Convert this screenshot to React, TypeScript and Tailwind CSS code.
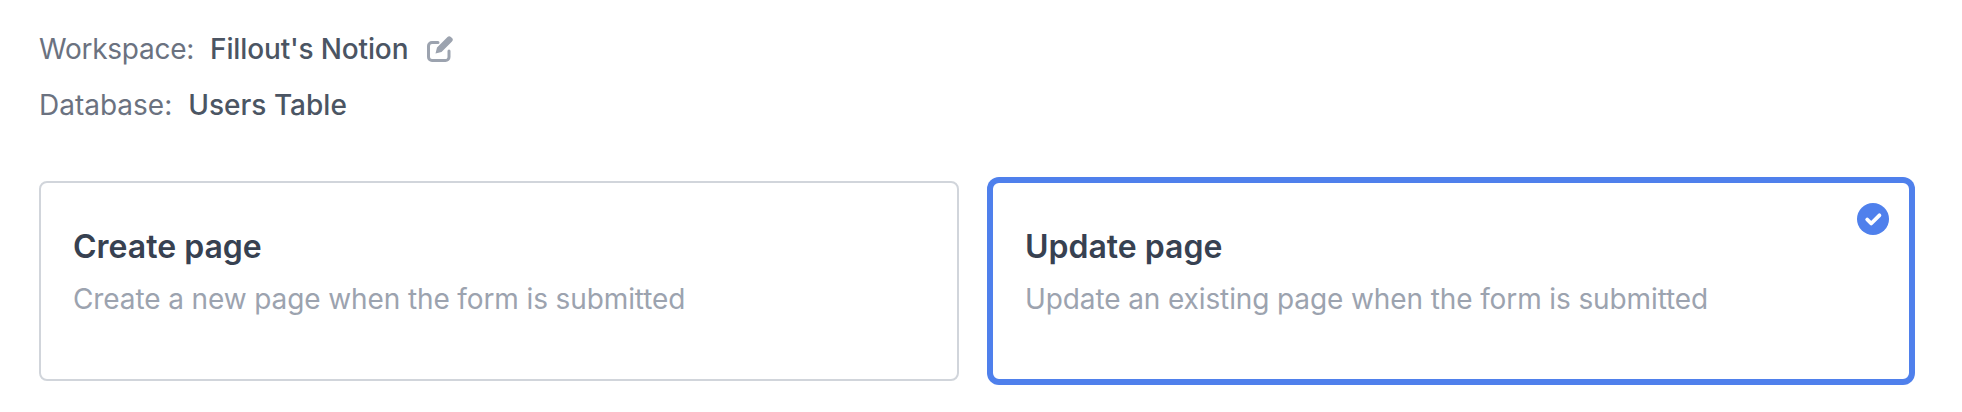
export default function App() {
  return (
    <div className="min-h-[412px] bg-white pl-[39px] pt-[33px] font-['Inter',sans-serif]">
      <div className="flex flex-col gap-[24px] text-[28px] leading-[32px]">
        <div className="flex items-center">
          <span className="tracking-[-0.25px] text-[#6b7280]">Workspace:</span>
          <span className="ml-[16px] font-medium tracking-[-0.15px] text-[#4b5563]">Fillout's Notion</span>
          <svg className="ml-[19px] h-[26px] w-[26px] text-[#9ca3af]" viewBox="0 0 26 26" fill="none">
            <path d="M11 6.500H5A3.500 3.500 0 0 0 1.500 10v11A3.500 3.500 0 0 0 5 24.500h13.500A3.500 3.500 0 0 0 22 21v-6" stroke="currentColor" strokeWidth="3" strokeLinecap="round" />
            <path d="M20.500 1a2.400 2.400 0 0 1 3.400 0l1.100 1.100a2.400 2.400 0 0 1 0 3.400L14.500 16l-6 1.500 1.500-6L20.500 1z" fill="currentColor" />
          </svg>
        </div>
        <div className="flex items-center">
          <span className="text-[#6b7280]">Database:</span>
          <span className="ml-[16px] font-medium text-[#4b5563]">Users Table</span>
        </div>
      </div>
      <div className="mt-[60px] grid w-[1872px] grid-cols-2 gap-8">
        <div className="flex h-[200px] flex-col rounded-[8px] border-2 border-[#d1d5db] bg-white px-[32px] pt-[44px]">
          <div className="text-[32px] leading-[40px] font-semibold text-[#374151]">Create page</div>
          <div className="mt-[16px] text-[28px] leading-[32px] tracking-[-0.11px] text-[#9ca3af]">Create a new page when the form is submitted</div>
        </div>
        <div className="relative flex h-[200px] flex-col rounded-[8px] border-2 border-[#4f80ec] bg-white px-[32px] pt-[44px] ring-4 ring-[#4f80ec]">
          <div className="text-[32px] leading-[40px] font-semibold text-[#374151]">Update page</div>
          <div className="mt-[16px] text-[28px] leading-[32px] tracking-[-0.11px] text-[#9ca3af]">Update an existing page when the form is submitted</div>
          <svg className="absolute top-[20px] right-[20px] h-[32px] w-[32px]" viewBox="0 0 32 32">
            <circle cx="16" cy="16" r="16" fill="#4f80ec" />
            <path d="M10.200 16.500l4 4 8.200-8.200" fill="none" stroke="#fff" strokeWidth="3.800" strokeLinecap="round" strokeLinejoin="round" />
          </svg>
        </div>
      </div>
    </div>
  );
}
